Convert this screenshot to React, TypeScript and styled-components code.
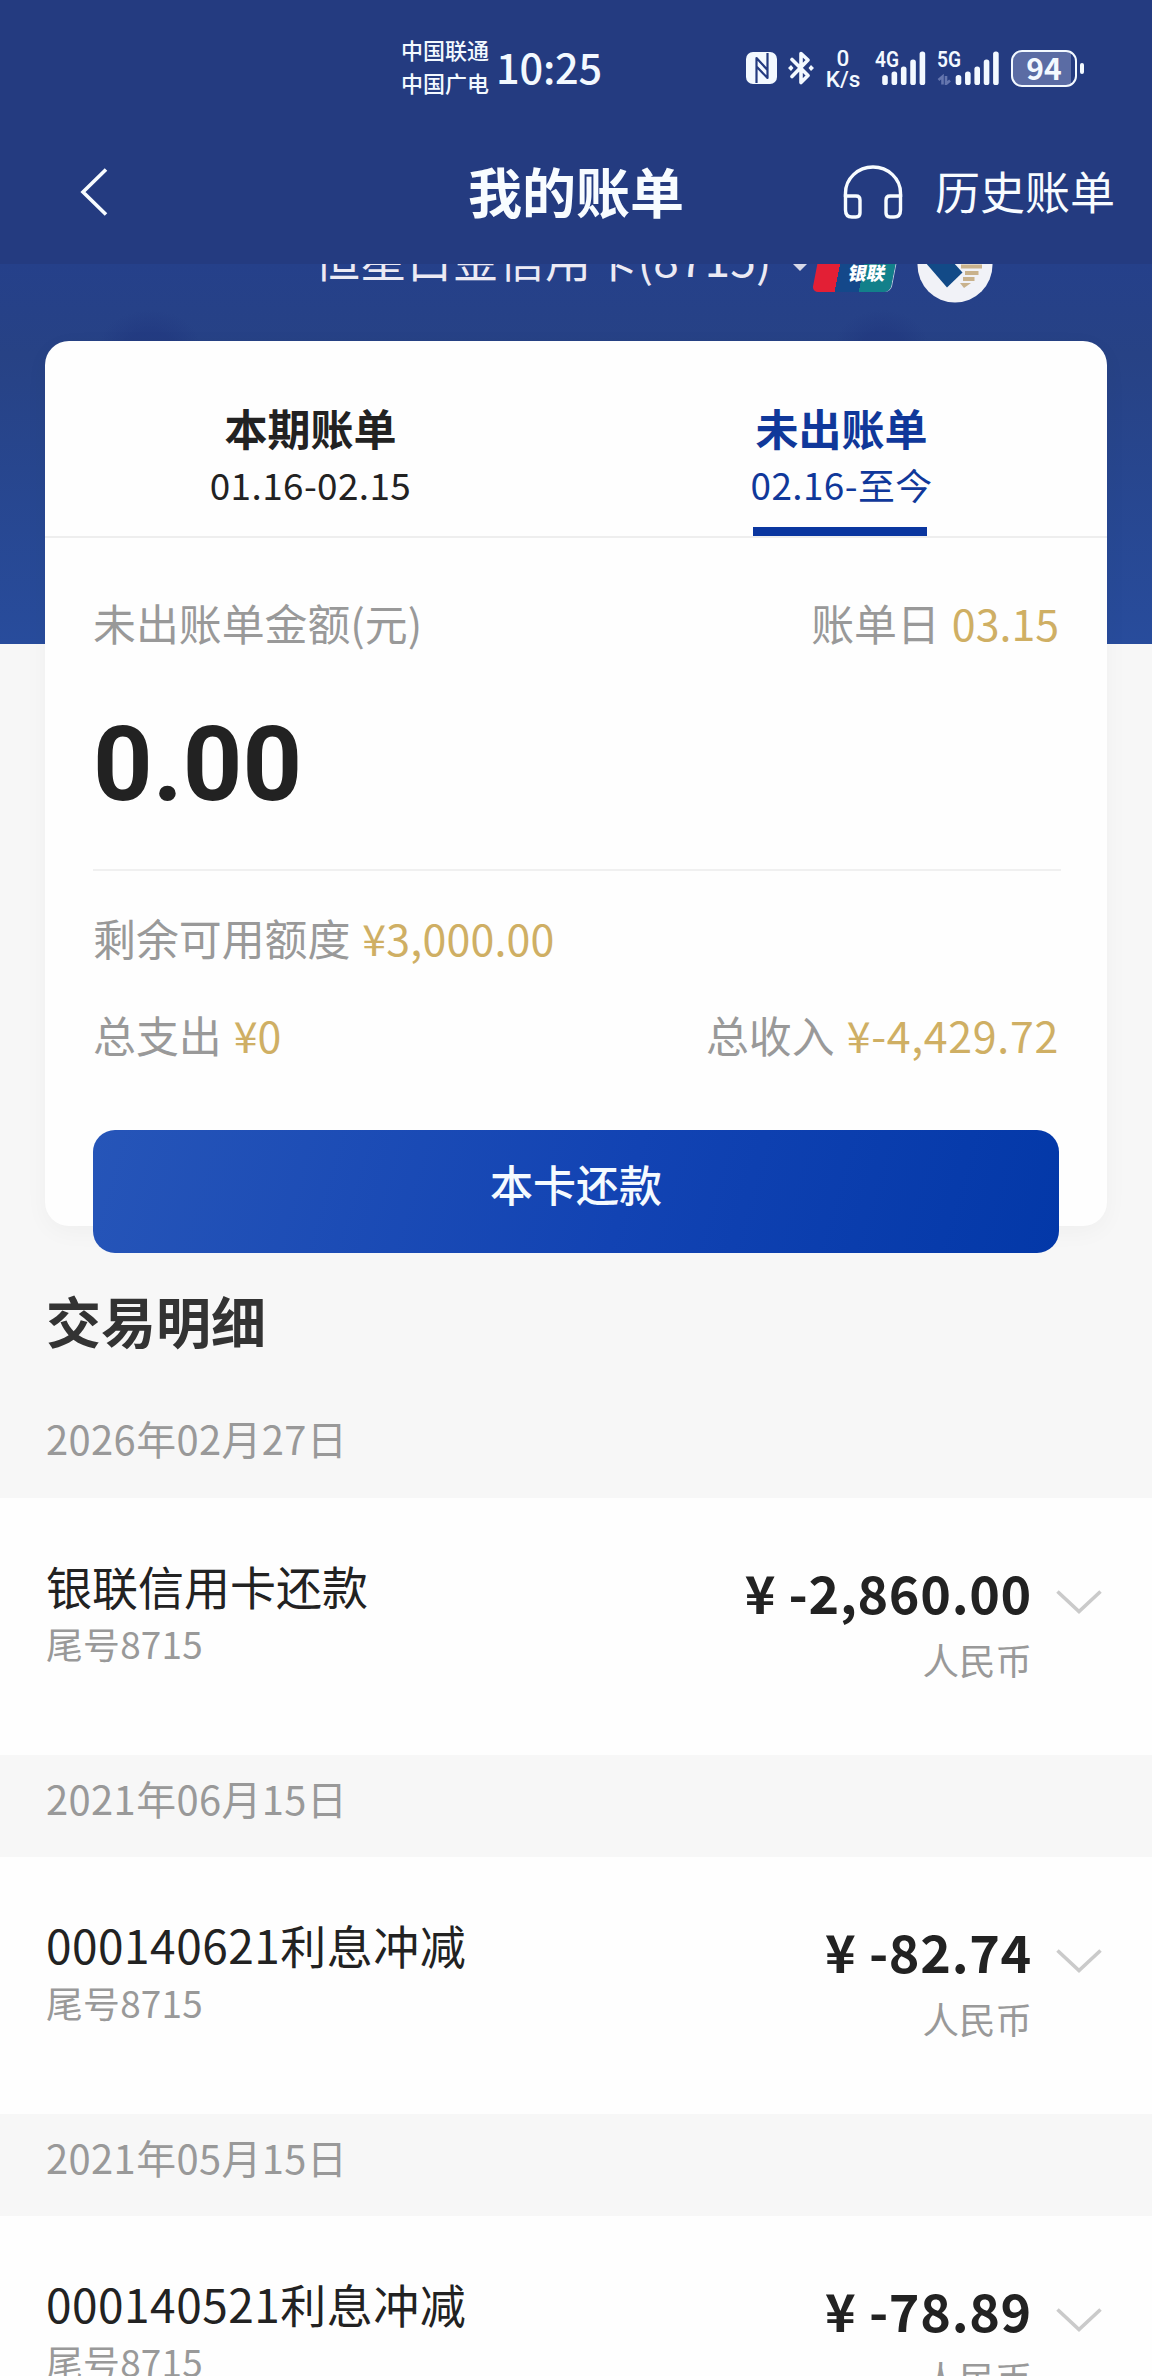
import React from "react";
import styled, { createGlobalStyle } from "styled-components";

const GlobalStyle = createGlobalStyle`
  * { box-sizing: border-box; }
  body {
    margin: 0;
    background: #f7f7f7;
    font-family: "Noto Sans CJK SC", "Noto Sans", sans-serif;
    color: #222;
  }
`;

const Screen = styled.div`
  width: 1152px;
  height: 2376px;
  overflow: hidden;
  background: #f7f7f7;
`;

/* ---------- status bar ---------- */
const StatusBar = styled.div`
  display: flex;
  align-items: center;
  height: 136px;
  padding-left: 401px;
  background: #243b80;
  color: #f3f9ff;
`;

const Carriers = styled.div`
  display: flex;
  flex-direction: column;
  width: 90px;
  font-size: 22px;
  line-height: 33px;
  font-weight: 500;
  margin-top: -4px;
`;

const Clock = styled.div`
  width: 120px;
  margin: -4px 0 0 5px;
  font-size: 41.5px;
  line-height: 60px;
  letter-spacing: -0.2px;
  font-weight: 500;
`;

const StatusIcons = styled.div`
  display: flex;
  align-items: center;
  margin-left: 130px;
`;

const Speed = styled.div`
  display: flex;
  flex-direction: column;
  align-items: center;
  width: 40px;
  margin: 2px 12px 0 9px;
  font-family: Roboto, sans-serif;
  font-size: 22.5px;
  line-height: 21.5px;
  font-weight: 500;
`;

const Signal = styled.div<{ $gap: number }>`
  position: relative;
  width: 50px;
  height: 34px;
  margin-right: ${(p) => p.$gap}px;
`;

const SignalTag = styled.span`
  position: absolute;
  left: 0;
  top: -2px;
  font-family: Roboto, sans-serif;
  font-size: 22px;
  line-height: 22px;
  font-weight: 600;
  transform: scaleX(0.87);
  transform-origin: left;
`;

const Battery = styled.div`
  display: flex;
  align-items: center;
  justify-content: center;
  width: 66px;
  height: 37px;
  border: 2.5px solid #f3f9ff;
  border-radius: 11px;
  background: linear-gradient(90deg, #5b6ca4 94%, #243b80 94%);
  font-size: 30px;
  line-height: 30px;
  font-weight: 700;
  padding-bottom: 3px;
`;

const BatteryTip = styled.div`
  width: 4px;
  height: 11px;
  margin-left: 3px;
  border-radius: 2px;
  background: #f3f9ff;
`;

/* ---------- navigation ---------- */
const NavBar = styled.div`
  display: grid;
  grid-template-columns: 1fr auto 1fr;
  align-items: center;
  height: 128px;
  padding: 0 37px 16px 80px;
  background: #243b80;
  color: #f8fcff;
`;

const NavTitle = styled.h1`
  margin: -3px 43px 0 0;
  font-size: 54px;
  line-height: 70px;
  font-weight: 700;
`;

const NavActions = styled.div`
  display: flex;
  align-items: center;
  justify-content: flex-end;
  gap: 32px;
`;

const HistoryLink = styled.span`
  margin-top: -3px;
  font-size: 45px;
  line-height: 60px;
`;

/* ---------- hero with the bill card ---------- */
const Hero = styled.div`
  height: 988px;
  background:
    radial-gradient(ellipse 50px 34px at 150px 80px, rgba(32, 54, 126, 0.5) 40%, transparent 100%),
    radial-gradient(ellipse 46px 34px at 882px 80px, rgba(32, 54, 126, 0.5) 40%, transparent 100%),
    linear-gradient(180deg, #25408a 0, #274285 90px, #284c9c 100%);
  background-size: 100% 380px;
  background-repeat: no-repeat;
`;

const CardPicker = styled.div`
  display: flex;
  height: 77px;
  overflow: hidden;
  padding-left: 314px;
  color: #eceaf4;
`;

const CardName = styled.span`
  width: 479px;
  margin-top: -37px;
  font-size: 46px;
  line-height: 60px;
  letter-spacing: 0.2px;
  white-space: nowrap;
`;

const Caret = styled.span`
  width: 0;
  height: 0;
  border: 7px solid transparent;
  border-top-color: #d7d9e8;
  border-bottom: 0;
`;

const UnionPay = styled.span`
  display: flex;
  justify-content: flex-end;
  width: 78px;
  height: 52px;
  margin: -24px 0 0 10px;
  padding: 22px 8px 0 0;
  border-radius: 6px;
  transform: skewX(-11deg);
  background: linear-gradient(90deg, #e31f35 29%, #14488a 29%, #14488a 60%, #12808a 60%);
  box-shadow: 1px 0 0 #b9cddd;
  color: #fff;
  font-size: 18.5px;
  line-height: 21px;
  font-weight: 900;
`;

const BankLogo = styled.svg`
  margin: -37px 0 0 22px;
  flex: none;
`;

const BillCard = styled.section`
  display: flex;
  flex-direction: column;
  width: 1062px;
  height: 885px;
  margin: 0 auto;
  border-radius: 24px;
  background: #fefefe;
  box-shadow: 0 6px 24px rgba(0, 0, 0, 0.035);
`;

const Tabs = styled.div`
  display: flex;
  flex: none;
  height: 197px;
  border-bottom: 2px solid #eeeeee;
`;

const Tab = styled.div<{ $active?: boolean }>`
  display: flex;
  flex: 1;
  flex-direction: column;
  align-items: center;
  padding-top: 56px;
  color: ${(p) => (p.$active ? "#10389a" : "#222")};
`;

const TabTitle = styled.div`
  font-size: 43px;
  line-height: 60px;
  font-weight: 700;
`;

const TabRange = styled.div`
  height: 70px;
  font-size: 36.9px;
  line-height: 54px;
  letter-spacing: 0.4px;
`;

const TabMark = styled.div`
  width: 174px;
  height: 9px;
  margin-right: 3px;
  background: #0a369f;
`;

const Line = styled.div<{ $top: number }>`
  display: flex;
  flex: none;
  justify-content: space-between;
  margin: ${(p) => p.$top}px 48px 0;
  font-size: 42.9px;
  line-height: 60px;
  color: #999;
`;

const Gold = styled.span<{ $spacing?: number }>`
  margin-left: 12px;
  letter-spacing: ${(p) => p.$spacing ?? 0}px;
  color: #cfaf64;
`;

const Total = styled.div`
  flex: none;
  margin: 53px 48px 0;
  font-family: Roboto, sans-serif;
  font-size: 104px;
  line-height: 120px;
  font-weight: 700;
  color: #222;
`;

const Divider = styled.div`
  flex: none;
  height: 2px;
  margin: 44px 46px 0 48px;
  background: #f0f0f0;
`;

const RepayButton = styled.button`
  height: 123px;
  flex: none;
  margin: 66px 48px 0;
  padding: 0 0 17px;
  border: 0;
  border-radius: 22px;
  background: linear-gradient(106deg, #2655b8 0%, #1243b3 55%, #0338a8 100%);
  color: #f4faff;
  font: 500 43px/60px "Noto Sans CJK SC", sans-serif;
`;

/* ---------- transactions ---------- */
const SectionTitle = styled.h2`
  margin: 0;
  padding: 32px 46px 0;
  font-size: 55px;
  line-height: 70px;
  font-weight: 700;
  color: #333;
`;

const DateBar = styled.div<{ $first?: boolean }>`
  height: ${(p) => (p.$first ? 144 : 102)}px;
  padding: ${(p) => (p.$first ? 54 : 13)}px 46px 0;
  font-size: 39.9px;
  line-height: 60px;
  letter-spacing: 0.4px;
  color: #999;
`;

const Row = styled.div`
  display: flex;
  height: 257px;
  padding: 0 50px 0 46px;
  background: #fefefe;
`;

const RowInfo = styled.div`
  flex: 1;
  padding-top: 57px;
`;

const RowName = styled.div<{ $numbered: boolean }>`
  font-size: 46px;
  line-height: 60px;
  letter-spacing: ${(p) => (p.$numbered ? 0.5 : 0)}px;
`;

const RowTail = styled.div`
  margin-top: 1px;
  font-size: 36.9px;
  line-height: 54px;
  letter-spacing: 0.2px;
  color: #999;
`;

const RowSum = styled.div`
  padding-top: 61px;
  text-align: right;
`;

const Amount = styled.div`
  font-size: 52px;
  line-height: 66px;
  letter-spacing: 0.7px;
  font-weight: 700;
`;

const Currency = styled.div`
  margin-top: 8px;
  font-size: 36.5px;
  line-height: 54px;
  color: #999;
`;

const Chevron = styled.svg`
  margin: 91px 0 0 24px;
`;

const NfcIcon = () => (
  <svg width="31" height="32" viewBox="0 0 31 32">
    <rect width="31" height="32" rx="7" fill="#f3f9ff" />
    <path
      d="M10.500 31V6L21.500 18M21.500 1V26L10.500 14.500"
      fill="none"
      stroke="#243b80"
      strokeWidth="2.200"
      strokeLinejoin="round"
    />
  </svg>
);

const BluetoothIcon = () => (
  <svg width="37" height="34" viewBox="-11 0 37 34">
    <path
      d="M4 8.500L20 24.500L13 31.500V2.500L20 9L4 25.500"
      fill="none"
      stroke="#f3f9ff"
      strokeWidth="3.600"
      strokeLinejoin="round"
      strokeLinecap="round"
    />
    <path d="M0 17L3 14L5.500 17L3 20ZM20.500 17L23 14L26 17L23 20Z" fill="#f3f9ff" />
  </svg>
);

const Bars = ({ offset, data }: { offset: number; data?: boolean }) => (
  <svg width="64" height="34" viewBox="0 0 64 34">
    {[10, 13.5, 18.5, 25.5, 33.5].map((h, i) => (
      <rect key={h} x={offset + i * 9.35} y={34 - h} width="5.6" height={h} rx="2.6" fill="#f3f9ff" />
    ))}
    {data && (
      <path d="M1.500 29L5.500 25.500V33.500M9 25V33L13 29.500" fill="none" stroke="#6576ae" strokeWidth="2.600" />
    )}
  </svg>
);

const BackIcon = () => (
  <svg width="28" height="48" viewBox="0 0 28 48">
    <path d="M26 1.500L3 24L26 46.500" fill="none" stroke="#f8fcff" strokeWidth="3.600" />
  </svg>
);

const HeadphonesIcon = () => (
  <svg width="60" height="54" viewBox="0 0 60 54" fill="none" stroke="#f8fcff" strokeWidth="3.400">
    <path d="M2.500 32V28A27.500 26 0 0 1 57.500 28V32" />
    <path d="M2.500 31H13Q17 31 17 35V48Q17 52 13 52H9Q2.500 52 2.500 45Z" />
    <path d="M57.500 31H47Q43 31 43 35V48Q43 52 47 52H51Q57.500 52 57.500 45Z" />
  </svg>
);

const transactions = [
  { date: "2026年02月27日", name: "银联信用卡还款", amount: "¥ -2,860.00" },
  { date: "2021年06月15日", name: "000140621利息冲减", amount: "¥ -82.74" },
  { date: "2021年05月15日", name: "000140521利息冲减", amount: "¥ -78.89" },
];

export default function App() {
  return (
    <Screen>
      <GlobalStyle />
      <StatusBar>
        <Carriers>
          <span>中国联通</span>
          <span>中国广电</span>
        </Carriers>
        <Clock>10:25</Clock>
        <StatusIcons>
          <NfcIcon />
          <BluetoothIcon />
          <Speed>
            <span>0</span>
            <span>K/s</span>
          </Speed>
          <Signal $gap={12}>
            <Bars offset={7.2} />
            <SignalTag>4G</SignalTag>
          </Signal>
          <Signal $gap={24}>
            <Bars offset={18.7} data />
            <SignalTag>5G</SignalTag>
          </Signal>
          <Battery>94</Battery>
          <BatteryTip />
        </StatusIcons>
      </StatusBar>

      <NavBar>
        <BackIcon />
        <NavTitle>我的账单</NavTitle>
        <NavActions>
          <HeadphonesIcon />
          <HistoryLink>历史账单</HistoryLink>
        </NavActions>
      </NavBar>

      <Hero>
        <CardPicker>
          <CardName>恒星白金信用卡(8715)</CardName>
          <Caret />
          <UnionPay>银联</UnionPay>
          <BankLogo width="76" height="76" viewBox="0 0 76 76">
            <circle cx="38" cy="38" r="37.5" fill="#f1f2f7" />
            <path d="M8 35L30 60.500L45.500 45.500L36 35Z" fill="#124a87" />
            <path d="M44 39.500H65M48 46H61.500M46 52H57.500" stroke="#c9b28c" strokeWidth="4" />
            <path d="M43 56H54L47 61Z" fill="#c9b28c" />
          </BankLogo>
        </CardPicker>

        <BillCard>
          <Tabs>
            <Tab>
              <TabTitle>本期账单</TabTitle>
              <TabRange>01.16-02.15</TabRange>
            </Tab>
            <Tab $active>
              <TabTitle>未出账单</TabTitle>
              <TabRange>02.16-至今</TabRange>
              <TabMark />
            </Tab>
          </Tabs>
          <Line $top={54}>
            <span>未出账单金额(元)</span>
            <span>
              账单日<Gold>03.15</Gold>
            </span>
          </Line>
          <Total>0.00</Total>
          <Divider />
          <Line $top={36}>
            <span>
              剩余可用额度<Gold $spacing={0.2}>¥3,000.00</Gold>
            </span>
          </Line>
          <Line $top={37}>
            <span>
              总支出<Gold>¥0</Gold>
            </span>
            <span>
              总收入<Gold $spacing={0.7}>¥-4,429.72</Gold>
            </span>
          </Line>
          <RepayButton>本卡还款</RepayButton>
        </BillCard>
      </Hero>

      <SectionTitle>交易明细</SectionTitle>
      {transactions.map((t, i) => (
        <React.Fragment key={t.date}>
          <DateBar $first={i === 0}>{t.date}</DateBar>
          <Row>
            <RowInfo>
              <RowName $numbered={/^\d/.test(t.name)}>{t.name}</RowName>
              <RowTail>尾号8715</RowTail>
            </RowInfo>
            <RowSum>
              <Amount>{t.amount}</Amount>
              <Currency>人民币</Currency>
            </RowSum>
            <Chevron width="46" height="26" viewBox="0 0 46 26">
              <path d="M1.500 2.500L23 22.500L44.500 2.500" fill="none" stroke="#cacaca" strokeWidth="3.600" />
            </Chevron>
          </Row>
        </React.Fragment>
      ))}
    </Screen>
  );
}
